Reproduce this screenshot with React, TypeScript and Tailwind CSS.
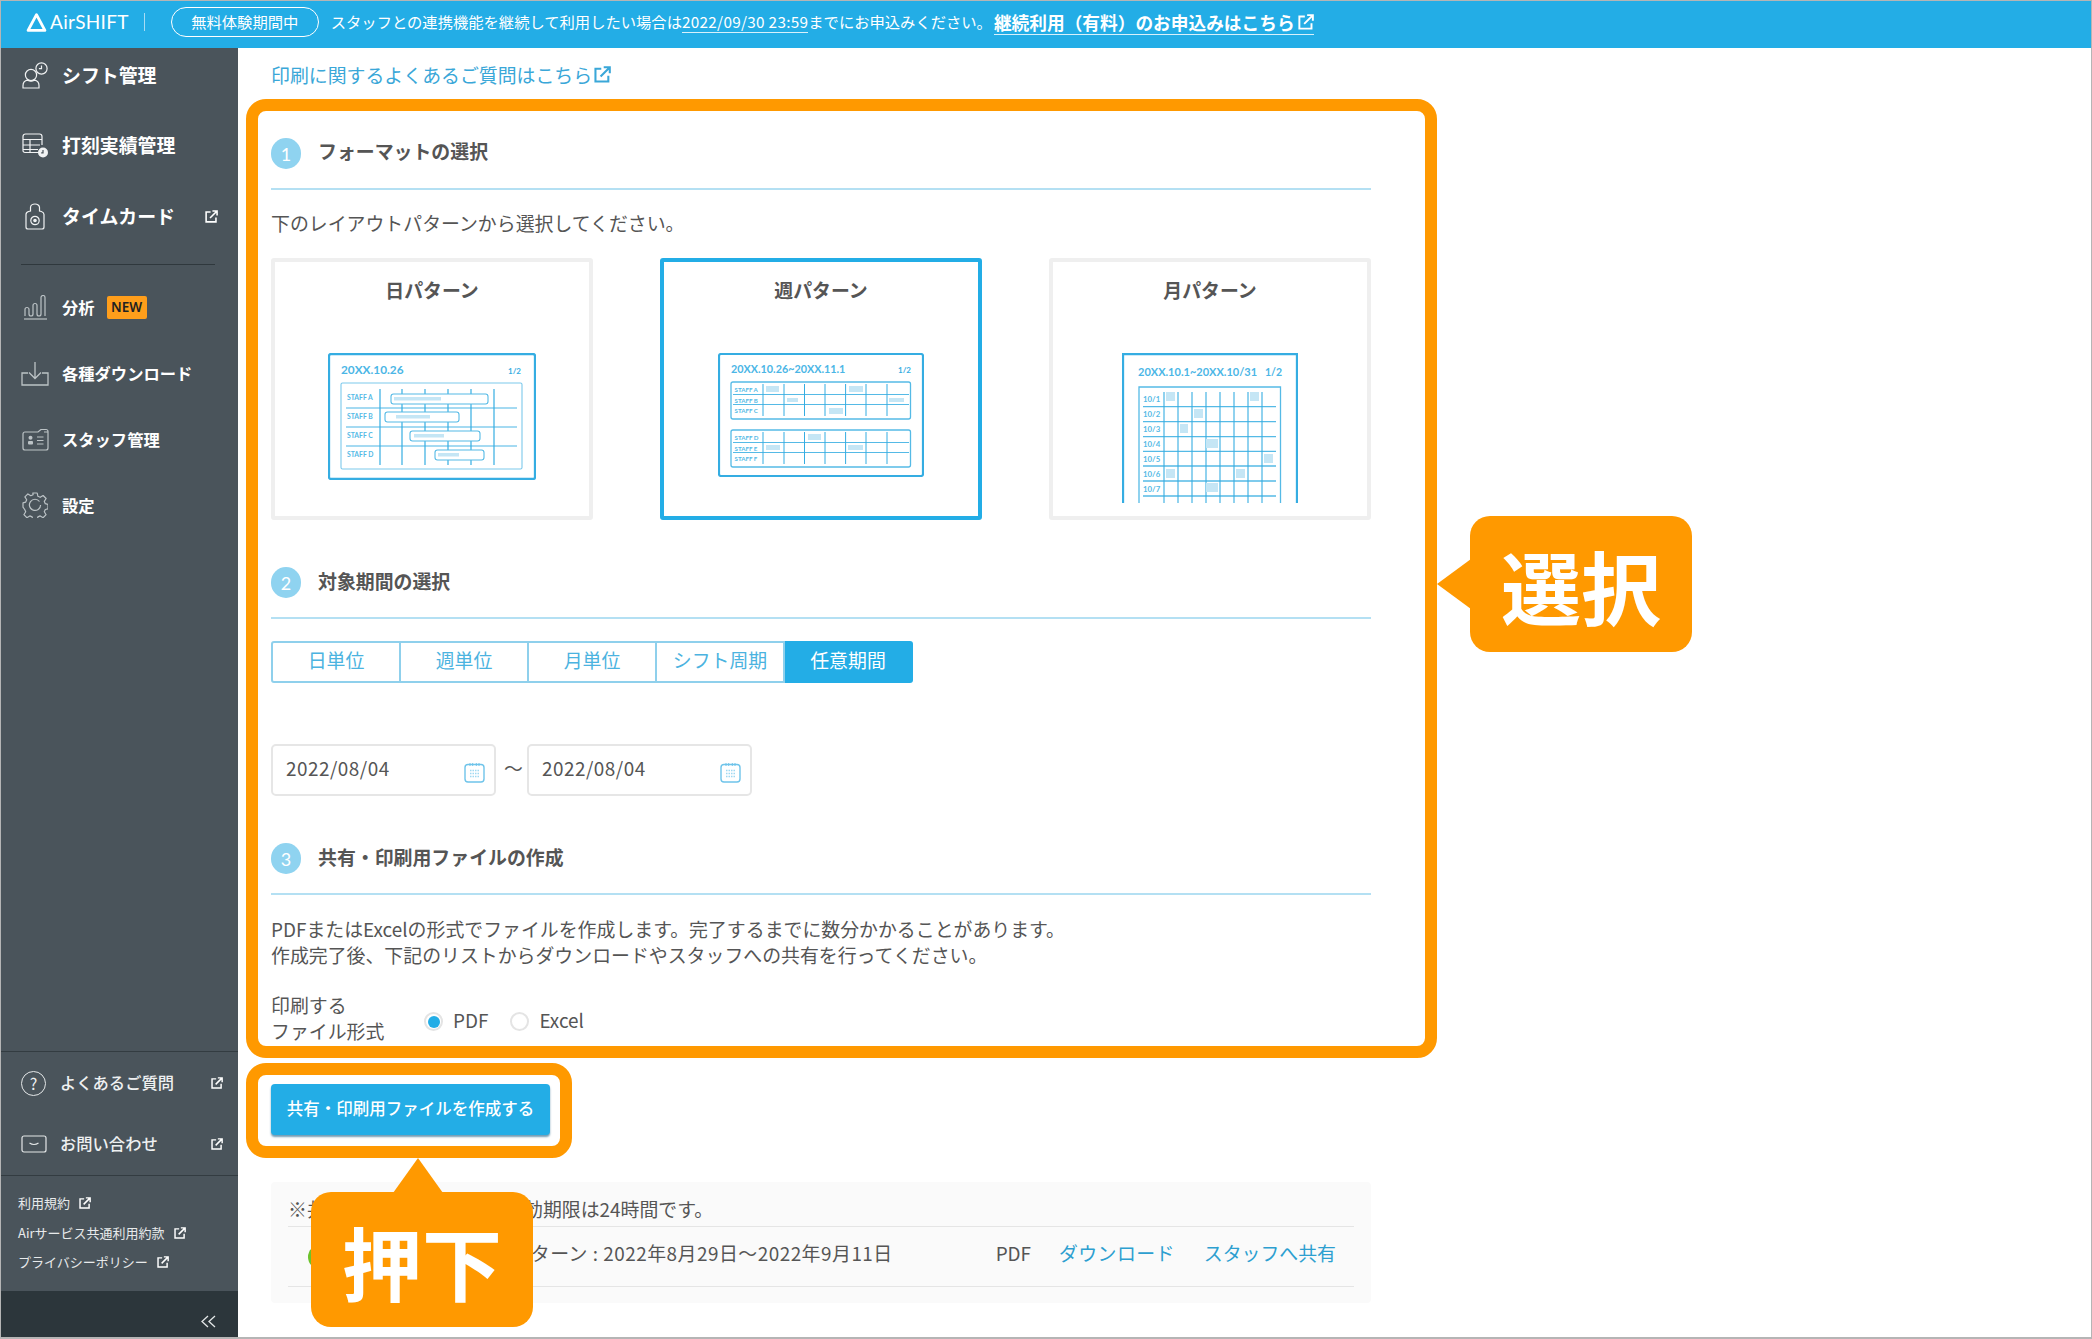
import type { ReactNode } from "react"

const ink = "#35ade2"
const pale = "#c5e6f5"

function ExternalIcon({ className = "" }: { className?: string }) {
  return (
    <svg viewBox="0 0 14 14" fill="none" stroke="currentColor" strokeWidth="1.7" className={className}>
      <path d="M6 2.2H1.2v10.6h10.6V8" />
      <path d="M5.4 8.6 12.4 1.6M8 1h5v5" />
    </svg>
  )
}

function ShiftIcon() {
  return (
    <svg viewBox="0 0 26 27" fill="none" stroke="#f0f2f3" strokeWidth="1.2" className="w-[26px] h-[27px]">
      <circle cx="9" cy="13" r="5.6" />
      <path d="M1 26v-2.5c0-3.4 2.4-5 4.6-5.4 2.2 1.2 4.6 1.2 6.8 0 2.2.4 4.6 2 4.6 5.4V26z" />
      <circle cx="19.5" cy="6.5" r="5.6" fill="#4a545b" />
      <path d="M19.5 3.4v3.3h-2.6" />
    </svg>
  )
}

function RecordIcon() {
  return (
    <svg viewBox="0 0 26 25" fill="none" stroke="#f0f2f3" strokeWidth="1.2" className="w-[26px] h-[25px]">
      <path d="M18 19.5H3c-1.2 0-2-.8-2-2V3.5C1 2 2 1 3.5 1h14C19 1 20 2 20 3.5V12" />
      <path d="M1 6.5h19M1 12h17M1 16.5h15M8 6.5v13" />
      <circle cx="21" cy="19.5" r="5" fill="#f0f2f3" stroke="none" />
      <path d="M21 17v2.8h-1.8" stroke="#4a545b" />
    </svg>
  )
}

function TimecardIcon() {
  return (
    <svg viewBox="0 0 20 27" fill="none" stroke="#f0f2f3" strokeWidth="1.2" className="w-[20px] h-[27px]">
      <path d="M3 26h14c1.2 0 2-.8 2-2V11.5c0-1.6-1-2.4-2.6-3L14.5 8V4.5C14.5 2.5 12.5 1 10 1S5.5 2.5 5.5 4.5V8L3.6 8.5C2 9 1 9.9 1 11.5V24c0 1.2.8 2 2 2z" />
      <circle cx="10" cy="17.5" r="4.2" />
      <circle cx="10" cy="17.5" r="1.2" fill="#f0f2f3" />
    </svg>
  )
}

function ChartIcon() {
  return (
    <svg viewBox="0 0 24 25" fill="none" stroke="#bcc3c6" strokeWidth="1.2" className="w-[24px] h-[25px]">
      <path d="M1 24h23" />
      <path d="M2 21v-6.5a2 2 0 0 1 4 0V19a2 2 0 0 0 4 0V10.500a2 2 0 0 1 4 0V19a2 2 0 0 0 4 0V2.500a2 2 0 0 1 4 0V21" />
    </svg>
  )
}

function DownloadIcon() {
  return (
    <svg viewBox="0 0 28 25" fill="none" stroke="#bcc3c6" strokeWidth="1.3" className="w-[28px] h-[25px]">
      <path d="M7 12H1v12h26V12h-6" />
      <path d="M14 1v16M8 11.5l6 6 6-6" />
    </svg>
  )
}

function StaffIcon() {
  return (
    <svg viewBox="0 0 27 23" fill="none" stroke="#bcc3c6" strokeWidth="1.2" className="w-[27px] h-[23px]">
      <path d="M19 1.5 16 4H3C1.8 4 1 4.8 1 6v14c0 1.2.8 2 2 2h21c1.2 0 2-.8 2-2V3.500c0-1.200-.8-2-2-2zM22 4h4" />
      <circle cx="8.500" cy="9.800" r="2" fill="#bcc3c6" stroke="none" />
      <rect x="6" y="13" width="5" height="3.500" rx="1" fill="#bcc3c6" stroke="none" />
      <path d="M15 9h6.500M15 12.500h6.500M15 16h6.500" />
    </svg>
  )
}

function GearIcon() {
  return (
    <svg viewBox="0 0 26 26" fill="none" stroke="#bcc3c6" strokeWidth="1.2" className="w-[26px] h-[26px]">
      <path d="M10.800 1h4.400l.7 3.300 2.300 1 2.900-1.800 3 3-1.800 2.900 1 2.300 2.700.7v4.400l-2.700.7-1 2.300 1.800 2.900-3 3-2.900-1.800-2.300 1-.7 2.700h-4.400l-.7-2.700-2.300-1-2.900 1.800-3-3 1.800-2.900-1-2.300L1 15.200v-4.400l2.700-.7 1-2.300L2.900 4.900l3-3 2.900 1.800 2.300-1z" strokeLinejoin="round" />
      <path d="M17.500 9.500A5.600 5.600 0 1 0 18.600 13" />
    </svg>
  )
}

function CalendarIcon() {
  return (
    <svg viewBox="0 0 21 21" fill="none" className="w-[21px] h-[21px]">
      <rect x="1" y="2.500" width="19" height="17.500" rx="3" stroke="#6fc4ea" strokeWidth="1.400" />
      <path d="M6 1v3M8.700 1v3M12.300 1v3M15 1v3" stroke="#6fc4ea" strokeWidth="1" />
      <path d="M6 8.500h9M6 11.500h9M6 14.500h9" stroke="#9fd8f1" strokeWidth="1.500" strokeDasharray="1.500 1" />
    </svg>
  )
}

function DailyDrawing() {
  const bars = [
    [63, 41, 97, 47, 66],
    [57, 59, 74, 34, 68],
    [82, 78, 70, 30, 86],
    [107, 97, 49, 21, 110],
  ]
  return (
    <svg viewBox="0 0 208 127" fill="none" className="w-[208px] h-[127px] font-['Lato',sans-serif]">
      <rect x="1" y="1" width="206" height="125" rx="2" stroke={ink} strokeWidth="2.300" />
      <text x="13" y="21" fontSize="11.800" fontWeight="700" fill="#4bb6e6">20XX.10.26</text>
      <text x="180" y="21" fontSize="8" fontWeight="700" fill={ink}>1/2</text>
      <rect x="13" y="30" width="181" height="86" rx="1.500" stroke="#7cc9ec" strokeWidth="1.100" />
      {[55, 74, 93].map((y) => <path key={y} d={`M18 ${y}H189`} stroke={ink} strokeWidth="0.900" />)}
      {[52, 74, 97, 120, 143, 166].map((x) => <path key={x} d={`M${x} 36V112`} stroke={ink} strokeWidth="1.200" />)}
      {["STAFF A", "STAFF B", "STAFF C", "STAFF D"].map((s, i) => (
        <text key={s} x="19" y={47 + i * 19} fontSize="6.800" fontWeight="700" fill="#55bae6">{s}</text>
      ))}
      {bars.map(([x, y, w, w2, x2]) => (
        <g key={y}>
          <rect x={x} y={y} width={w} height="10" rx="2.500" fill="#fff" stroke="#55bae6" strokeWidth="1.100" />
          <rect x={x2} y={y + 3} width={w2} height="3.500" fill={pale} />
        </g>
      ))}
    </svg>
  )
}

function WeeklyTable({ top, names, fills }: { top: number; names: string[]; fills: number[][] }) {
  return (
    <g>
      <rect x="13" y={top} width="179.500" height="37" rx="2" stroke="#55bae6" strokeWidth="1.300" />
      <path d={`M15 ${top + 12.5}H191M15 ${top + 22.5}H191`} stroke="#55bae6" strokeWidth="1" />
      {[45, 66, 86.5, 107, 127.6, 148, 169].map((x) => (
        <path key={x} d={`M${x} ${top + 2}V${top + 34}`} stroke={ink} strokeWidth="1" />
      ))}
      {fills.map(([x, y, w, h]) => <rect key={`${x}${y}`} x={x} y={y} width={w} height={h} fill={pale} />)}
      {names.map((s, i) => (
        <text key={s} x="16.500" y={top + 10 + i * 10.5} fontSize="6.200" fontWeight="700" fill="#55bae6">{s}</text>
      ))}
    </g>
  )
}

function WeeklyDrawing() {
  return (
    <svg viewBox="0 0 206 124" fill="none" className="w-[206px] h-[124px] font-['Lato',sans-serif]">
      <rect x="1" y="1" width="204" height="122" rx="2" stroke={ink} strokeWidth="2.200" />
      <text x="13" y="20" fontSize="10.800" fontWeight="700" fill="#4bb6e6">20XX.10.26~20XX.11.1</text>
      <text x="180" y="20" fontSize="8" fontWeight="700" fill={ink}>1/2</text>
      <WeeklyTable
        top={29}
        names={["STAFF A", "STAFF B", "STAFF C"]}
        fills={[[48, 33, 13, 6], [131, 33, 14, 6], [69, 45, 11, 4], [171, 45, 15, 4], [111, 55, 14, 6]]}
      />
      <WeeklyTable
        top={77}
        names={["STAFF D", "STAFF E", "STAFF F"]}
        fills={[[90, 81, 13, 6], [48, 92, 14, 5], [130, 92, 15, 5]]}
      />
    </svg>
  )
}

function MonthlyDrawing() {
  const fills = [
    [44, 39, 9, 9], [128, 39, 9, 9], [72, 56, 9, 9], [58, 71, 8, 9], [84, 86, 12, 9],
    [142, 101, 9, 9], [44, 116, 9, 9], [114, 116, 9, 9], [84, 130, 12, 9],
  ]
  return (
    <svg viewBox="0 0 176 150" fill="none" className="w-[176px] h-[150px] font-['Lato',sans-serif]">
      <path d="M1 150V1h174v149" stroke={ink} strokeWidth="2.300" />
      <text x="16" y="23" fontSize="11" fontWeight="700" fill="#4bb6e6">20XX.10.1~20XX.10/31</text>
      <text x="143" y="23" fontSize="10.500" fontWeight="700" fill="#4bb6e6">1/2</text>
      <path d="M17 150V34h141.500v116" stroke="#55bae6" strokeWidth="1.300" />
      {[53.7, 68.7, 83.7, 98.3, 113, 128, 143].map((y) => <path key={y} d={`M21 ${y}H154`} stroke="#55bae6" strokeWidth="1.300" />)}
      {[42, 56, 70, 84, 98, 112, 126, 140].map((x) => <path key={x} d={`M${x} 39V150`} stroke={ink} strokeWidth="1.100" />)}
      {fills.map(([x, y, w, h]) => <rect key={`${x}${y}`} x={x} y={y} width={w} height={h} fill={pale} />)}
      {["10/1", "10/2", "10/3", "10/4", "10/5", "10/6", "10/7"].map((s, i) => (
        <text key={s} x="21" y={49 + i * 15} fontSize="7.800" fontWeight="700" fill="#55bae6">{s}</text>
      ))}
    </svg>
  )
}

function SectionHead({ no, title, lift = "pb-[4px]" }: { no: number; title: string; lift?: string }) {
  return (
    <div className="border-b-2 border-[#b4e0f3] pb-[19px]">
      <div className="flex items-center h-[31px]">
        <span className="w-[30px] h-[31px] rounded-full bg-[#8fd3f0] text-white text-[18px] flex items-center justify-center font-['Lato',sans-serif]">{no}</span>
        <span className={`ml-[17px] text-[18.900px] font-bold text-[#555] ${lift}`}>{title}</span>
      </div>
    </div>
  )
}

function PatternCard({ title, active, children }: { title: string; active?: boolean; children: ReactNode }) {
  return (
    <div className={`w-[322px] h-[262px] border-4 rounded-[3px] flex flex-col items-center pt-[15px] overflow-hidden ${active ? "border-[#23ade6]" : "border-[#efefef]"}`}>
      <div className="text-[18.900px] leading-[26px] font-bold text-[#555]">{title}</div>
      <div className="mt-[50px]">{children}</div>
    </div>
  )
}

function DateBox() {
  return (
    <div className="w-[225px] h-[52px] border-2 border-[#e6e6e6] rounded-[5px] flex items-center justify-between pl-[13px] pr-[9px] text-[#555]">
      <span className="pb-[4px] tracking-[0.5px]">2022/08/04</span>
      <span className="mt-[4px]"><CalendarIcon /></span>
    </div>
  )
}

function NavRow({ icon, label, className, children }: { icon: ReactNode; label: string; className: string; children?: ReactNode }) {
  return (
    <div className="h-[40px] flex items-center pl-[20px]">
      <span className="w-[28px] flex justify-center">{icon}</span>
      <span className={`ml-[13px] pb-[1px] font-bold text-white ${className}`}>{label}</span>
      {children}
    </div>
  )
}

const tabs = ["日単位", "週単位", "月単位", "シフト周期", "任意期間"]

export default function App() {
  return (
    <div className="relative w-[2092px] h-[1339px] overflow-hidden bg-white border border-b-2 border-[#b5b5b5] flex flex-col font-['Noto_Sans_CJK_JP','Noto_Sans',sans-serif] text-[18.900px] leading-[26px]">
      {/* Header */}
      <div className="h-[47px] shrink-0 bg-[#23ade6] text-white flex items-center pb-[5px]">
        <svg viewBox="0 0 20 19" fill="none" stroke="#fff" strokeWidth="2.700" strokeLinejoin="round" className="w-[21px] h-[20px] ml-[25px]">
          <path d="M10 2.500 18 17.500H2z" />
        </svg>
        <span className="ml-[3px] pb-[1px] text-[19px] font-['Lato',sans-serif] tracking-[0.3px]">AirSHIFT</span>
        <span className="ml-[15px] w-px h-[18px] bg-[#a8dcf4]" />
        <span className="ml-[26px] w-[148px] h-[30px] rounded-full border border-white text-[15.300px] pb-[3px] flex items-center justify-center">無料体験期間中</span>
        <span className="ml-[12px] pb-[3px] text-[15.300px]">スタッフとの連携機能を継続して利用したい場合は</span>
        <span className="mb-[1px] text-[15.300px] tracking-[0.3px] border-b border-[#d8f0fb] leading-[22px]">2022/09/30 23:59</span>
        <span className="pb-[3px] text-[15.300px]">までにお申込みください。</span>
        <span className="ml-[2px] flex items-center gap-[3px] text-[17.700px] font-bold border-b border-[#d8f0fb] leading-[24px]">
          継続利用（有料）のお申込みはこちら
          <ExternalIcon className="w-[16px] h-[16px]" />
        </span>
      </div>

      <div className="flex flex-1 min-h-0">
        {/* Sidebar */}
        <div className="w-[237px] shrink-0 bg-[#4a545b] flex flex-col">
          <div className="flex flex-col gap-[30.500px] pt-[7px]">
            <NavRow icon={<ShiftIcon />} label="シフト管理" className="text-[18.900px]" />
            <NavRow icon={<RecordIcon />} label="打刻実績管理" className="text-[18.900px]" />
            <NavRow icon={<TimecardIcon />} label="タイムカード" className="text-[18.900px]">
              <ExternalIcon className="w-[13px] h-[13px] ml-auto mr-[20px] text-white" />
            </NavRow>
          </div>
          <div className="mt-[28px] ml-[20px] w-[194px] h-px bg-[#2f383d]" />
          <div className="flex flex-col gap-[26px] mt-[22px]">
            <NavRow icon={<ChartIcon />} label="分析" className="text-[16.300px] text-[#eef0f1]">
              <span className="ml-[12px] w-[40px] h-[23px] rounded-[2px] bg-[#ff9e1b] text-[#222] text-[13.500px] font-semibold flex items-center justify-center font-['Noto_Sans',sans-serif]">NEW</span>
            </NavRow>
            <NavRow icon={<DownloadIcon />} label="各種ダウンロード" className="text-[16.300px] text-[#eef0f1]" />
            <NavRow icon={<StaffIcon />} label="スタッフ管理" className="text-[16.300px] text-[#eef0f1]" />
            <NavRow icon={<GearIcon />} label="設定" className="text-[16.300px] text-[#eef0f1]" />
          </div>

          <div className="mt-auto border-t border-[#333c41] pt-[11px] pb-[11px] flex flex-col gap-[21px] text-[#eef0f1] text-[16.300px] font-medium">
            <div className="h-[40px] flex items-center pl-[20px]">
              <span className="w-[25px] h-[25px] rounded-full border border-[#e4e7e8] flex items-center justify-center text-[16px] font-normal">?</span>
              <span className="ml-[14px] pb-[3px]">よくあるご質問</span>
              <ExternalIcon className="w-[12px] h-[12px] ml-auto mr-[15px] text-white" />
            </div>
            <div className="h-[40px] flex items-center pl-[20px]">
              <svg viewBox="0 0 26 18" fill="none" stroke="#e4e7e8" strokeWidth="1.200" className="w-[26px] h-[18px]">
                <rect x="1" y="1" width="24" height="16" rx="2" />
                <path d="M8.500 8c3 2 6 2 9 0" />
              </svg>
              <span className="ml-[13px] pb-[2px]">お問い合わせ</span>
              <ExternalIcon className="w-[12px] h-[12px] ml-auto mr-[15px] text-white" />
            </div>
          </div>
          <div className="border-t border-[#333c41] pt-[17px] pl-[17px] h-[116px] flex flex-col gap-[9.500px] text-[13px] text-[#e8eaeb] leading-[20px]">
            <div className="flex items-center gap-[9px]">利用規約<ExternalIcon className="w-[12px] h-[12px] text-white" /></div>
            <div className="flex items-center gap-[9px]">Airサービス共通利用約款<ExternalIcon className="w-[12px] h-[12px] text-white" /></div>
            <div className="flex items-center gap-[9px]">プライバシーポリシー<ExternalIcon className="w-[12px] h-[12px] text-white" /></div>
          </div>
          <div className="h-[46px] bg-[#2c363b] flex items-center justify-end pr-[22px] pt-[14px]">
            <svg viewBox="0 0 15 13" fill="none" stroke="#e4e7e8" strokeWidth="1.300" className="w-[15px] h-[13px]">
              <path d="M7 1 1 6.500 7 12M14 1 8 6.500 14 12" />
            </svg>
          </div>
        </div>

        {/* Main */}
        <div className="flex-1 pl-[8px] text-[#555]">
          <div className="h-[51px] pl-[25px] pt-[14px] flex items-start text-[18.900px] text-[#3aa7d8]">
            印刷に関するよくあるご質問はこちら
            <ExternalIcon className="w-[17px] h-[17px] mt-[4px] ml-[2px]" />
          </div>

          {/* Selection frame */}
          <div className="w-[1191px] h-[959px] border-12 border-[#ff9900] rounded-[20px] pl-[13px] pt-[27px]">
            <div className="w-[1100px]">
              <SectionHead no={1} title="フォーマットの選択" lift="pb-[6px]" />
              <p className="mt-[20px]">下のレイアウトパターンから選択してください。</p>
              <div className="mt-[22px] flex justify-between">
                <PatternCard title="日パターン"><DailyDrawing /></PatternCard>
                <PatternCard title="週パターン" active><WeeklyDrawing /></PatternCard>
                <PatternCard title="月パターン"><MonthlyDrawing /></PatternCard>
              </div>

              <div className="mt-[47px]"><SectionHead no={2} title="対象期間の選択" /></div>
              <div className="mt-[22px] w-[642px] h-[42px] flex text-[#4bb3e0]">
                {tabs.map((t, i) => (
                  <div
                    key={t}
                    className={`flex-1 pb-[4px] flex items-center justify-center border-y-2 border-r-2 ${i === 0 ? "border-l-2 rounded-l-[3px]" : ""} ${i === 4 ? "bg-[#23ade6] border-[#23ade6] text-white rounded-r-[3px]" : "border-[#8fd0ec]"}`}
                  >
                    {t}
                  </div>
                ))}
              </div>
              <div className="mt-[61px] flex items-center gap-[8px]">
                <DateBox />
                <span className="w-[15px] text-center pb-[4px]">〜</span>
                <DateBox />
              </div>

              <div className="mt-[47px]"><SectionHead no={3} title="共有・印刷用ファイルの作成" /></div>
              <p className="mt-[21px]">
                PDFまたはExcelの形式でファイルを作成します。完了するまでに数分かかることがあります。<br />
                作成完了後、下記のリストからダウンロードやスタッフへの共有を行ってください。
              </p>
              <div className="mt-[27px] flex items-center h-[53px]">
                <div className="w-[153px] pb-[8px]">印刷する<br />ファイル形式</div>
                <span className="w-[19px] h-[19px] rounded-full border-2 border-[#e4e4e4] flex items-center justify-center">
                  <span className="w-[12px] h-[12px] rounded-full bg-[#23ade6]" />
                </span>
                <span className="ml-[10px] pb-[3px]">PDF</span>
                <span className="ml-[22px] w-[19px] h-[19px] rounded-full border-2 border-[#e4e4e4]" />
                <span className="ml-[10px] pb-[3px]">Excel</span>
              </div>
            </div>
          </div>

          {/* Button frame */}
          <div className="mt-[5px] w-[326px] h-[95px] border-12 border-[#ff9900] rounded-[20px] pl-[13px] pt-[9px]">
            <button className="w-[279px] h-[51px] pb-[4px] rounded-[4px] bg-[#23ade6] text-white text-[16.500px] font-medium shadow-[0_2px_2px_rgba(20,90,130,0.6)]">
              共有・印刷用ファイルを作成する
            </button>
          </div>

          {/* File list */}
          <div className="mt-[24px] ml-[25px] w-[1100px] h-[121px] rounded-[4px] bg-[#fafafa] px-[17px] pt-[14px]">
            <div className="h-[30px]">※<span className="tracking-[-0.8px]">共有・印刷用ファイルの有</span>効期限は24時間です。</div>
            <div className="h-[61px] border-y border-[#e5e5e5] flex items-center pr-[18px]">
              <span className="ml-[20px] w-[24px] h-[24px] rounded-full bg-[#6cc32b]" />
              <span className="ml-[160px] pb-[7px] tracking-[0.5px]">週パターン : 2022年8月29日～2022年9月11日</span>
              <span className="ml-auto pb-[7px]">PDF</span>
              <span className="ml-[28px] pb-[7px] text-[#2d9fd0] tracking-[0.4px]">ダウンロード</span>
              <span className="ml-[29px] pb-[7px] text-[#2d9fd0]">スタッフへ共有</span>
            </div>
          </div>
        </div>
      </div>

      {/* Callouts */}
      <div className="absolute left-[1469px] top-[515px] w-[222px] h-[136px] rounded-[20px] bg-[#ff9900] flex items-center justify-center text-white text-[80px] font-bold">
        選択
        <svg viewBox="0 0 34 50" className="absolute left-[-33px] top-[43px] w-[34px] h-[50px]" fill="#ff9900">
          <path d="M0 25 34 0v50z" />
        </svg>
      </div>
      <div className="absolute left-[310px] top-[1191px] w-[222px] h-[135px] rounded-[20px] bg-[#ff9900] flex items-center justify-center text-white text-[80px] font-bold">
        押下
        <svg viewBox="0 0 50 35" className="absolute left-[82px] top-[-34px] w-[50px] h-[35px]" fill="#ff9900">
          <path d="M25 0 50 35H0z" />
        </svg>
      </div>
    </div>
  )
}
